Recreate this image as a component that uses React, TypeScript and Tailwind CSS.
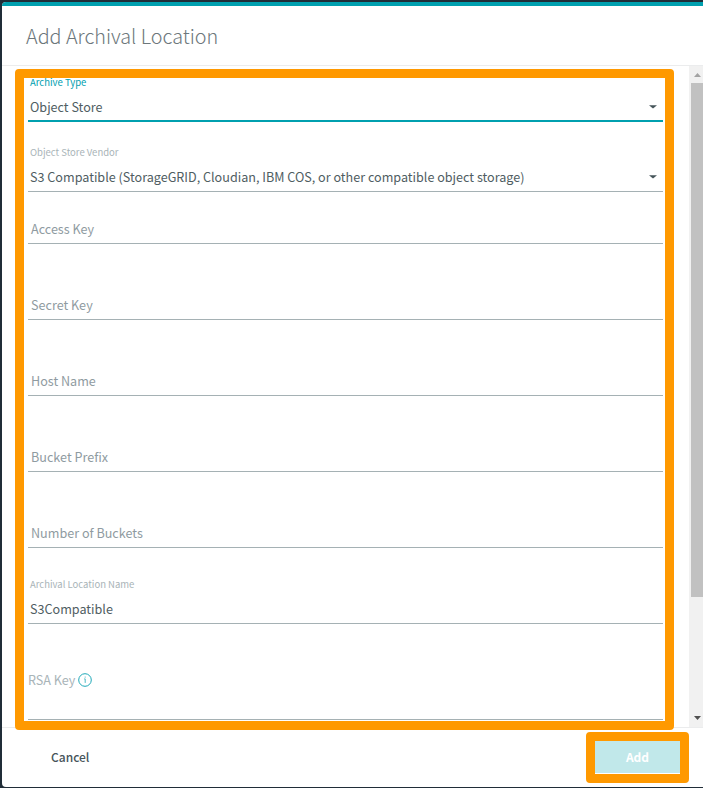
import React from "react";

type FieldProps = {
  label?: string;
  value?: string;
  placeholder?: string;
  active?: boolean;
  select?: boolean;
  height: string;
};

function Caret() {
  return (
    <svg width="8" height="4" viewBox="0 0 8 4" className="mr-[6px] -mt-px shrink-0">
      <path d="M0 0.2H8L4 3.4Z" fill="#46555a" />
    </svg>
  );
}

function Field({ label, value, placeholder, active, select, height }: FieldProps) {
  return (
    <div
      className={`flex flex-col justify-end ${height} ${
        active ? "border-b-2 border-[#00a0af]" : "border-b border-[#a5b1b4] pb-px"
      }`}
    >
      {label && (
        <div
          className={`mb-[3px] h-[18px] pl-[2px] text-[9.5px] leading-[18px] whitespace-nowrap ${
            active ? "text-[#00a0af]" : "text-[#a9b4b8]"
          }`}
        >
          {label}
        </div>
      )}
      <div className="flex h-[26px] items-center justify-between pl-[2px] text-[12.6px] leading-[26px] whitespace-nowrap">
        {value ? (
          <span className="text-[#4f5d62]">{value}</span>
        ) : (
          <span className="pl-px text-[#8f9ba1]">{placeholder}</span>
        )}
        {select && <Caret />}
      </div>
    </div>
  );
}

function InfoIcon() {
  return (
    <svg width="14" height="14" viewBox="0 0 14 14" fill="none" className="ml-[3px]">
      <circle cx="7" cy="7" r="6.3" stroke="#1fa9b8" strokeWidth="1" />
      <path d="M6.2 5.9H7.2V9.9M7.2 3.6V4.6" stroke="#1fa9b8" strokeWidth="0.8" />
    </svg>
  );
}

function Scrollbar() {
  return (
    <div className="flex w-[14px] shrink-0 flex-col bg-[#f1f1f1]">
      <div className="flex h-[17px] items-center justify-center pl-[3px] pt-px">
        <svg width="7" height="4" viewBox="0 0 7 4">
          <path d="M3.5 0L7 4H0Z" fill="#a3a3a3" />
        </svg>
      </div>
      <div className="ml-[2px] h-[514px] bg-[#c1c1c1]" />
      <div className="flex-1" />
      <div className="flex h-[17px] items-center justify-center pb-[2px] pl-[3px]">
        <svg width="7" height="4" viewBox="0 0 7 4">
          <path d="M0 0H7L3.5 4Z" fill="#505050" />
        </svg>
      </div>
    </div>
  );
}

export default function App() {
  return (
    <div className="h-[788px] w-[703px] overflow-hidden bg-[#202d38] pt-[2px] pb-px pl-[2px] font-['Noto_Sans_CJK_SC','Noto_Sans',sans-serif]">
      <div className="relative flex h-[785px] flex-col overflow-hidden rounded-l-[4px] bg-white">
        <div className="h-1 shrink-0 bg-[#00a0af]" />
        <header className="flex h-[60px] shrink-0 items-center border-b border-[#ebeced] pl-6">
          <h1 className="text-[19.8px] font-light leading-[30px] text-[#6c777b]">Add Archival Location</h1>
        </header>
        <main className="flex h-[661px] shrink-0">
          <div className="flex-1 pr-[26px] pl-[26px]">
            <Field label="Archive Type" value="Object Store" active select height="h-[56px]" />
            <Field
              label="Object Store Vendor"
              value="S3 Compatible (StorageGRID, Cloudian, IBM COS, or other compatible object storage)"
              select
              height="h-[70px]"
            />
            <Field placeholder="Access Key" height="h-[52px]" />
            <Field placeholder="Secret Key" height="h-[76px]" />
            <Field placeholder="Host Name" height="h-[76px]" />
            <Field placeholder="Bucket Prefix" height="h-[76px]" />
            <Field placeholder="Number of Buckets" height="h-[76px]" />
            <Field label="Archival Location Name" value="S3Compatible" height="h-[76px]" />
            <div className="flex h-24 items-end border-b border-[#a5b1b4] pb-[26px]">
              <div className="flex h-[26px] items-center text-[12.6px] leading-[26px] text-[#a9b4b8]">
                RSA Key
                <InfoIcon />
              </div>
            </div>
          </div>
          <Scrollbar />
        </main>
        <footer className="flex flex-1 items-start justify-between border-t border-[#ebeced] pr-[23px] pl-[49px]">
          <button className="mt-[14px] h-[30px] text-[12px] font-medium leading-[30px] text-[#46555a]">Cancel</button>
          <button className="mt-[13px] h-8 w-[85px] bg-[#c1e8ea] text-[12px] font-bold leading-8 text-white">Add</button>
        </footer>
        <div className="absolute top-[67px] left-[13px] h-[661px] w-[659px] rounded-[4px] border-[9px] border-[#ff9900]" />
        <div className="absolute top-[730px] left-[584px] h-[51px] w-[103px] rounded-[4px] border-[9px] border-[#ff9900]" />
      </div>
    </div>
  );
}
